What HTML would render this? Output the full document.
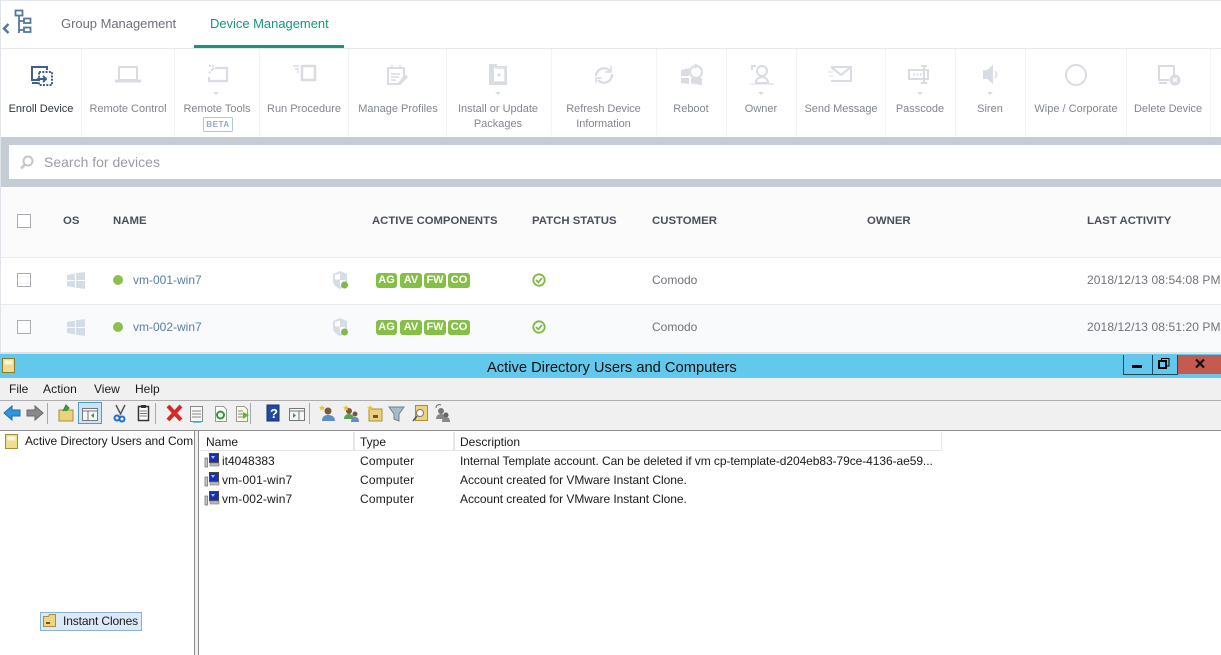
<!DOCTYPE html>
<html><head><meta charset="utf-8"><style>
html,body{margin:0;padding:0;background:#fff}
body{width:1221px;height:655px;position:relative;overflow:hidden;font-family:"Liberation Sans",sans-serif}
.a{position:absolute}
.t{position:absolute;white-space:nowrap}
.c{position:absolute;text-align:center;font-size:11px;line-height:15px;color:#82868f;white-space:nowrap;transform:translateX(-50%)}
.h{position:absolute;top:214px;font-size:11.4px;font-weight:bold;color:#4a4f5a;line-height:14px;white-space:nowrap}
.sep{position:absolute;top:49px;width:1px;height:88px;background:#f3f4f6}
.w{position:absolute;font-size:12px;line-height:15px;color:#1a1a1a;white-space:nowrap;font-family:"Liberation Sans",sans-serif}
.b{position:absolute;height:15px;background:#86bf45;border-radius:3px;color:#fff;font-size:11px;font-weight:bold;line-height:15px;text-align:center}
.cb{position:absolute;left:17px;width:12px;height:12px;border:1px solid #a9adb3;background:#fff}
</style></head><body>
<div class="a" style="left:0;top:0;width:1221px;height:1px;background:#e3e6ea"></div>
<div class="a" style="left:0;top:0;width:1px;height:352px;background:#dfe4ea"></div>
<div class="a" style="left:0;top:48px;width:1221px;height:1px;background:#e6e8eb"></div>
<svg class="a" style="left:0;top:6px" width="36" height="30" viewBox="0 0 36 30" fill="none" stroke="#55779f" stroke-width="1.800">
<path d="M8.500 18l-4.500 4.500 4.500 4.500" stroke-width="2.500"/><rect x="15.500" y="4.500" width="7" height="5"/><path d="M19 10v17M19 15h5M19 24h5"/><rect x="24" y="12.500" width="6.500" height="4.500"/><rect x="24" y="21.500" width="6.500" height="4.500"/></svg>
<div class="t" style="left:61px;top:16px;font-size:13px;line-height:16px;color:#6c7078;letter-spacing:-.03px">Group Management</div>
<div class="t" style="left:210px;top:16px;font-size:13px;line-height:16px;color:#17967a;letter-spacing:-.03px">Device Management</div>
<div class="a" style="left:194px;top:45px;width:150px;height:3px;background:#13977a"></div>

<div class="sep" style="left:81px"></div><div class="sep" style="left:174px"></div><div class="sep" style="left:259px"></div><div class="sep" style="left:348px"></div><div class="sep" style="left:446px"></div><div class="sep" style="left:551px"></div><div class="sep" style="left:656px"></div><div class="sep" style="left:726px"></div><div class="sep" style="left:796px"></div><div class="sep" style="left:885px"></div><div class="sep" style="left:955px"></div><div class="sep" style="left:1025px"></div><div class="sep" style="left:1126px"></div><div class="sep" style="left:1210px"></div>

<svg class="a" style="left:0;top:49px" width="1221" height="88" viewBox="0 49 1221 88" fill="none" stroke="#dadce4" stroke-width="2">
<path d="M32 77V67h15v3" stroke="#3f5f8e"/><path d="M32 77v3h6M32 83h6" stroke="#3f5f8e"/><path d="M39 72h13v13H39z" stroke="#3f5f8e" stroke-dasharray="2 1.300"/><path d="M37 79h9M43 76l3 3-3 3" stroke="#3f5f8e"/>
<rect x="119" y="67" width="18" height="13"/><path d="M115 81h26" stroke-width="3"/>
<path d="M215 68h12v13h-18v-4" stroke-width="2.200"/><path d="M209 73l5-5M209 66l4 0 0 4" stroke-dasharray="2 1"/>
<path d="M213 92h6l-3 3z" fill="#dadce4" stroke="none"/>
<path d="M302 66h13v14h-13z" stroke-width="2.500"/><path d="M293 66h6M295 69h4M297 72h2" stroke-width="1.500"/>
<path d="M388 68h16v9l-5 7h-11z"/><path d="M392 65v4M400 65v4M391 74h9M391 77h8M391 80h5" stroke-width="1.500"/><path d="M399 84l8-8" stroke-width="3"/>
<path d="M489 64l8 0v2h10v19h-18z" fill="#dadce4" stroke="none"/><rect x="494" y="67" width="11" height="15" fill="#fff" stroke="none"/><path d="M495 68h10v14h-10" stroke-width="1.500"/><circle cx="499" cy="75" r="1.500" fill="#dadce4" stroke="none"/>
<path d="M495 92h6l-3 3z" fill="#dadce4" stroke="none"/>
<path d="M596 76a8 8 0 0 1 14-5M612 74a8 8 0 0 1-14 6" stroke-width="2.300"/><path d="M611 66v6h-6M596 83v-5h6" stroke-width="1.500"/>
<path d="M681 70l8-2v8h-8zM691 78h11v7l-11-1.500zM681 78h8v6l-8-1z" fill="#dadce4" stroke="none"/><circle cx="696" cy="72" r="6"/><path d="M695 64l3 2-3 2" stroke-width="1.500"/>
<circle cx="762" cy="71" r="5"/><path d="M756 83c0-4 3-6 6-6s6 2 6 6zM752 70v-4h4M772 84h-1" stroke-width="2"/><path d="M750 84h24" stroke-width="1.500" opacity=".6"/>
<path d="M758 92h6l-3 3z" fill="#dadce4" stroke="none"/>
<path d="M831 67h20v14h-20M831 67l10 8 10-8"/><path d="M828 72h5M829 76h4" stroke-width="1"/>
<path d="M909 70h19v9h-19z M924 66v17M921 66h6M921 83h6"/><path d="M913 74.500h9" stroke-dasharray="2 1.500"/>
<path d="M917 92h6l-3 3z" fill="#dadce4" stroke="none"/>
<path d="M983 70h4l6-5v19l-6-5h-4z" fill="#dadce4" stroke="none"/><path d="M995 71c2 2 2 5 0 7" stroke-width="1.500"/>
<path d="M987 92h6l-3 3z" fill="#dadce4" stroke="none"/>
<circle cx="1076" cy="75" r="10"/>
<path d="M1174 78v-12h-15v14h10M1159 83h8"/><circle cx="1175" cy="80" r="5.500" fill="#dadce4" stroke="none"/><path d="M1173 78l4 4M1177 78l-4 4" stroke="#fff" stroke-width="1.500"/>
</svg>

<div class="c" style="left:41px;top:102px;color:#2f3540">Enroll Device</div>
<div class="c" style="left:128px;top:102px">Remote Control</div>
<div class="c" style="left:217px;top:102px">Remote Tools</div>
<div class="a" style="left:203px;top:117px;width:28px;height:13px;border:1px solid #b0c4dc;border-radius:2px;font-size:8px;font-weight:bold;line-height:13px;text-align:center;color:#93a9c6;letter-spacing:.5px">BETA</div>
<div class="c" style="left:304px;top:102px">Run Procedure</div>
<div class="c" style="left:398px;top:102px">Manage Profiles</div>
<div class="c" style="left:498px;top:102px">Install or Update<br>Packages</div>
<div class="c" style="left:603.500px;top:102px;letter-spacing:-.05px">Refresh Device<br>Information</div>
<div class="c" style="left:691px;top:102px">Reboot</div>
<div class="c" style="left:761px;top:102px">Owner</div>
<div class="c" style="left:841px;top:102px;letter-spacing:-.03px">Send Message</div>
<div class="c" style="left:920px;top:102px">Passcode</div>
<div class="c" style="left:990px;top:102px">Siren</div>
<div class="c" style="left:1076px;top:102px">Wipe / Corporate</div>
<div class="c" style="left:1168px;top:102px;letter-spacing:-.03px">Delete Device</div>

<div class="a" style="left:1px;top:137px;width:1220px;height:50px;background:#c5ccd4"></div>
<div class="a" style="left:9px;top:145px;width:1212px;height:34px;background:#fff"></div>
<svg class="a" style="left:19px;top:154px" width="16" height="16" fill="none" stroke="#c4c6c9" stroke-width="2"><circle cx="9" cy="7" r="4.500"/><path d="M6 10.500l-4 4" stroke-width="2.500"/></svg>
<div class="t" style="left:44px;top:153px;font-size:14px;line-height:18px;color:#9a9da3">Search for devices</div>

<div class="a" style="left:1px;top:187px;width:1220px;height:70px;background:#fbfbfc"></div>
<div class="a" style="left:1px;top:257px;width:1220px;height:1px;background:#e8ebee"></div>
<div class="cb" style="top:214px"></div>
<div class="h" style="left:63px">OS</div>
<div class="h" style="left:113px">NAME</div>
<div class="h" style="left:372px;font-size:11.300px">ACTIVE COMPONENTS</div>
<div class="h" style="left:532px">PATCH STATUS</div>
<div class="h" style="left:652px">CUSTOMER</div>
<div class="h" style="left:867px">OWNER</div>
<div class="h" style="left:1087px">LAST ACTIVITY</div>

<div class="a" style="left:1px;top:304px;width:1220px;height:1px;background:#e8ebee"></div>
<div class="a" style="left:1px;top:305px;width:1220px;height:47px;background:#f8fafb"></div>

<div class="cb" style="top:273px"></div>
<svg class="a" style="left:67px;top:272px" width="18" height="17" fill="#d3dde6"><path d="M0 3l8-1.500V8H0zM9 1.300L18 0v8H9zM0 9h8v6.500L0 14zM9 9h9v8l-9-1.300z"/></svg>
<div class="a" style="left:113px;top:275px;width:10px;height:10px;border-radius:50%;background:#8cc04a"></div>
<div class="t" style="left:133px;top:272px;font-size:12px;line-height:16px;color:#5b7ba6">vm-001-win7</div>
<svg class="a" style="left:332px;top:271px" width="18" height="19"><path d="M1 3l7-3 7 3v7c0 4-3 6-7 8-4-2-7-4-7-8z" fill="#d5dde6"/><path d="M8 2.500v6H3V4zM8 9h5c0 3-2 5-5 6.500z" fill="#fff"/><circle cx="12.500" cy="14" r="3.500" fill="#7dbb42"/></svg>
<div class="b" style="left:376px;top:273px;width:21px">AG</div><div class="b" style="left:400px;top:273px;width:22px">AV</div><div class="b" style="left:424px;top:273px;width:22px">FW</div><div class="b" style="left:448px;top:273px;width:22px">CO</div>
<svg class="a" style="left:532px;top:273px" width="14" height="14" fill="none" stroke="#7fb944" stroke-width="1.800"><circle cx="7" cy="7" r="5.700"/><path d="M4 7l2.300 2.300L10 5"/></svg>
<div class="t" style="left:652px;top:272px;font-size:12px;line-height:16px;color:#6f737a">Comodo</div>
<div class="t" style="left:1087px;top:272px;font-size:12px;line-height:16px;color:#6f737a;letter-spacing:.1px">2018/12/13 08:54:08 PM</div>

<div class="cb" style="top:320px"></div>
<svg class="a" style="left:67px;top:319px" width="18" height="17" fill="#d3dde6"><path d="M0 3l8-1.500V8H0zM9 1.300L18 0v8H9zM0 9h8v6.500L0 14zM9 9h9v8l-9-1.300z"/></svg>
<div class="a" style="left:113px;top:322px;width:10px;height:10px;border-radius:50%;background:#8cc04a"></div>
<div class="t" style="left:133px;top:319px;font-size:12px;line-height:16px;color:#5b7ba6">vm-002-win7</div>
<svg class="a" style="left:332px;top:318px" width="18" height="19"><path d="M1 3l7-3 7 3v7c0 4-3 6-7 8-4-2-7-4-7-8z" fill="#d5dde6"/><path d="M8 2.500v6H3V4zM8 9h5c0 3-2 5-5 6.500z" fill="#fff"/><circle cx="12.500" cy="14" r="3.500" fill="#7dbb42"/></svg>
<div class="b" style="left:376px;top:320px;width:21px">AG</div><div class="b" style="left:400px;top:320px;width:22px">AV</div><div class="b" style="left:424px;top:320px;width:22px">FW</div><div class="b" style="left:448px;top:320px;width:22px">CO</div>
<svg class="a" style="left:532px;top:320px" width="14" height="14" fill="none" stroke="#7fb944" stroke-width="1.800"><circle cx="7" cy="7" r="5.700"/><path d="M4 7l2.300 2.300L10 5"/></svg>
<div class="t" style="left:652px;top:319px;font-size:12px;line-height:16px;color:#6f737a">Comodo</div>
<div class="t" style="left:1087px;top:319px;font-size:12px;line-height:16px;color:#6f737a;letter-spacing:.1px">2018/12/13 08:51:20 PM</div>

<div class="a" style="left:0;top:352px;width:1221px;height:2px;background:#dfe3e8"></div>

<div class="a" style="left:0;top:354px;width:1221px;height:24px;background:#62c8ec"></div>
<svg class="a" style="left:2px;top:358px" width="14" height="16"><rect x=".5" y=".5" width="12" height="14" fill="#f0dc8e" stroke="#8a7a30"/><rect x="2.500" y="2.500" width="8" height="4" fill="#fbf6d8"/></svg>
<div class="t" style="left:487px;top:359px;font-size:14.700px;line-height:18px;color:#111">Active Directory Users and Computers</div>
<div class="a" style="left:1123px;top:355px;width:28px;height:19px;border:solid #1d4a5c;border-width:0 1px 1px 1px"></div>
<div class="a" style="left:1132px;top:365px;width:10px;height:3px;background:#000"></div>
<div class="a" style="left:1151px;top:355px;width:26px;height:19px;border:solid #1d4a5c;border-width:0 1px 1px 0"></div>
<svg class="a" style="left:1158px;top:358px" width="12" height="12" fill="none" stroke="#000"><path d="M3.500 2.500V.5h7.500v7.500H9" stroke-width="1"/><rect x="1" y="3" width="7" height="7" stroke-width="2"/></svg>
<div class="a" style="left:1178px;top:355px;width:43px;height:19px;background:#c75a50"></div>
<svg class="a" style="left:1194px;top:358px" width="12" height="11" stroke="#111" stroke-width="2.200"><path d="M2 1.500l8 8M10 1.500l-8 8"/></svg>

<div class="a" style="left:0;top:378px;width:1221px;height:52px;background:#f0f0f0"></div>
<div class="a" style="left:0;top:400px;width:1221px;height:1px;background:#adadad"></div>
<div class="a" style="left:0;top:430px;width:1221px;height:1px;background:#8f8f8f"></div>
<div class="w" style="left:9px;top:382px">File</div>
<div class="w" style="left:43px;top:382px;letter-spacing:.1px">Action</div>
<div class="w" style="left:94px;top:382px">View</div>
<div class="w" style="left:135px;top:382px">Help</div>

<svg class="a" style="left:0;top:401px" width="460" height="29" viewBox="0 401 460 29">
<path d="M4 413l8-7v4h8v6h-8v4z" fill="#2f96dc" stroke="#1e6fb0"/>
<path d="M43 413l-8-7v4h-8v6h8v4z" fill="#8a8a8a" stroke="#666"/>
<path d="M47.500 403v21M155.500 403v21M250.500 403v21M309.500 403v21" stroke="#a8a8a8"/>
<rect x="59" y="410" width="14" height="11" fill="#ecd27e" stroke="#a98f3a"/><path d="M63 411l3-6 3 3-3 3" fill="#3fa34a" stroke="#2b8238"/>
<rect x="78.500" y="402.500" width="23" height="21" fill="#cde4f7" stroke="#4f9ad0"/><rect x="82.500" y="408.500" width="15" height="12" fill="#f5f5f5" stroke="#777"/><path d="M82 411h16M88 411v9" stroke="#777"/><path d="M94 413v5l-3-2.500z" fill="#3a9a44"/>
<path d="M125 405l-5 10M116 405l4 8" stroke="#555" stroke-width="1.500"/><circle cx="117" cy="418" r="2.500" fill="none" stroke="#1e6fd0" stroke-width="2"/><circle cx="122" cy="419" r="2.500" fill="none" stroke="#1e6fd0" stroke-width="2"/>
<rect x="138.500" y="406.500" width="10" height="14" fill="#fff" stroke="#333" stroke-width="1.500"/><rect x="141" y="405" width="5" height="3" fill="#333"/><path d="M140 411h7M140 413.500h7M140 416h7" stroke="#777"/>
<path d="M168 406l13 14M181 406l-13 14" stroke="#d5282a" stroke-width="4"/>
<rect x="190.500" y="406.500" width="12" height="15" fill="#f6f6f6" stroke="#8a8a8a"/><path d="M192 411h9M192 414h9M192 417h9" stroke="#888"/><path d="M193 422h8" stroke="#3fb0c0" stroke-width="1.500"/>
<path d="M215.500 406.500h8l3 3v12h-11z" fill="#fff" stroke="#999"/><circle cx="220.500" cy="415" r="3.500" fill="none" stroke="#2c9a3c" stroke-width="2"/>
<path d="M236.500 406.500h8l3 3v12h-11z" fill="#fdf9dc" stroke="#999"/><path d="M238 411h5M238 414h5M238 417h5" stroke="#888"/><path d="M243 412l6 3-6 4z" fill="#53b948"/>
<rect x="267" y="405" width="12" height="16" fill="#22499c" stroke="#16306e"/><text x="270" y="418" font-family="Liberation Sans,sans-serif" font-weight="bold" font-size="13" fill="#fff">?</text>
<rect x="289.500" y="408.500" width="15" height="12" fill="#f5f5f5" stroke="#777"/><path d="M289 411h16M299 411v9" stroke="#777"/><path d="M293 413v5l3-2.500z" fill="#3a9a44"/>
<circle cx="328" cy="411" r="3.500" fill="#7a5a3a"/><path d="M322 421c0-5 3-6 6-6s7 1 7 6z" fill="#5f8fc0"/><path d="M322 405l1 2 2 0-1.500 1.500.5 2-2-1-2 1 .5-2L319 407l2 0z" fill="#f5c21b"/>
<circle cx="349" cy="411" r="3" fill="#7a5a3a"/><path d="M344 419c0-4 3-5 5-5s5 1 5 5z" fill="#5da04e"/><circle cx="355" cy="414" r="2.500" fill="#6a5a4a"/><path d="M351 422c0-4 2-5 4-5s4 1 4 5z" fill="#5f8fc0"/><path d="M346 405l1 2 2 0-1.500 1.500.5 2-2-1-2 1 .5-2L343 407l2 0z" fill="#f5c21b"/>
<rect x="369" y="409" width="13" height="12" fill="#ecd27e" stroke="#a98f3a"/><rect x="373" y="415" width="5" height="3" fill="#6a5a20"/><path d="M370 405l1 2 2 0-1.500 1.500.5 2-2-1-2 1 .5-2L367 407l2 0z" fill="#f5c21b"/>
<path d="M389 407h15l-5 7v7l-5-2v-5z" fill="#a9bbca" stroke="#6d8293"/>
<rect x="415.500" y="405.500" width="12" height="15" fill="#ecd27e" stroke="#a98f3a"/><circle cx="420" cy="413" r="3.500" fill="#f8f8f8" stroke="#777"/><path d="M417 416l-4 5" stroke="#555" stroke-width="1.500"/>
<circle cx="441" cy="411" r="3" fill="#777"/><path d="M436 419c0-4 3-5 5-5s5 1 5 5z" fill="#888"/><circle cx="446" cy="415" r="2.500" fill="#666"/><path d="M442 422c0-4 2-5 4-5s4 1 4 5z" fill="#888"/><path d="M436 408c0-3 3-4 5-3" fill="none" stroke="#666"/>
</svg>

<div class="a" style="left:0;top:431px;width:194px;height:224px;background:#fff"></div>
<div class="a" style="left:194px;top:430px;width:1px;height:225px;background:#8b8b8b"></div>
<div class="a" style="left:195px;top:431px;width:3px;height:224px;background:#f0f0f0"></div>
<div class="a" style="left:198px;top:430px;width:1px;height:225px;background:#8b8b8b"></div>
<svg class="a" style="left:5px;top:434px" width="14" height="16"><rect x=".5" y=".5" width="12" height="14" fill="#f0dc8e" stroke="#a08f3c"/><rect x="2.500" y="2.500" width="8" height="4" fill="#fbf6d8"/></svg>
<div class="w" style="left:25px;top:434px;width:168px;overflow:hidden;letter-spacing:-.09px">Active Directory Users and Com</div>

<div class="a" style="left:40px;top:612px;width:100px;height:17px;background:#dbe9f8;border:1px solid #8ab0dc"></div>
<svg class="a" style="left:43px;top:613px" width="14" height="15"><path d="M.5 3.500h5l1 -2h6v12H.5z" fill="#eed584" stroke="#a98f3a"/><rect x="3" y="9" width="4" height="2" fill="#6a5a20"/></svg>
<div class="w" style="left:63px;top:614px;letter-spacing:-.12px">Instant Clones</div>

<div class="a" style="left:199px;top:431px;width:1022px;height:224px;background:#fff"></div>
<div class="a" style="left:200px;top:450px;width:742px;height:1px;background:#e5e5e5"></div>
<div class="a" style="left:353px;top:432px;width:2px;height:18px;background:#e5e5e5"></div>
<div class="a" style="left:453px;top:432px;width:2px;height:18px;background:#e5e5e5"></div>
<div class="a" style="left:941px;top:432px;width:1px;height:18px;background:#e5e5e5"></div>
<div class="w" style="left:206px;top:435px">Name</div>
<div class="w" style="left:360px;top:435px">Type</div>
<div class="w" style="left:460px;top:435px">Description</div>

<svg width="0" height="0" style="position:absolute"><defs><g id="pc"><rect x="5.500" y=".5" width="9" height="9" fill="#1a2fb0" stroke="#444"/><path d="M7 3h4l-2 3z" fill="#9ec2ff"/><rect x="1" y="5" width="2.500" height="9" fill="#c9c9c9" stroke="#666" stroke-width=".7"/><rect x="6" y="10" width="9" height="3" fill="#bbb" stroke="#777" stroke-width=".6"/></g></defs></svg>
<svg class="a" style="left:204px;top:453px" width="16" height="15"><use href="#pc"/></svg>
<svg class="a" style="left:204px;top:472px" width="16" height="15"><use href="#pc"/></svg>
<svg class="a" style="left:204px;top:491px" width="16" height="15"><use href="#pc"/></svg>
<div class="w" style="left:222px;top:454px">it4048383</div>
<div class="w" style="left:360px;top:454px;letter-spacing:.2px">Computer</div>
<div class="w" style="left:460px;top:454px;letter-spacing:-.07px">Internal Template account. Can be deleted if vm cp-template-d204eb83-79ce-4136-ae59...</div>
<div class="w" style="left:222px;top:473px;letter-spacing:.15px">vm-001-win7</div>
<div class="w" style="left:360px;top:473px;letter-spacing:.2px">Computer</div>
<div class="w" style="left:460px;top:473px;letter-spacing:-.05px">Account created for VMware Instant Clone.</div>
<div class="w" style="left:222px;top:492px;letter-spacing:.15px">vm-002-win7</div>
<div class="w" style="left:360px;top:492px;letter-spacing:.2px">Computer</div>
<div class="w" style="left:460px;top:492px;letter-spacing:-.05px">Account created for VMware Instant Clone.</div>
</body></html>
